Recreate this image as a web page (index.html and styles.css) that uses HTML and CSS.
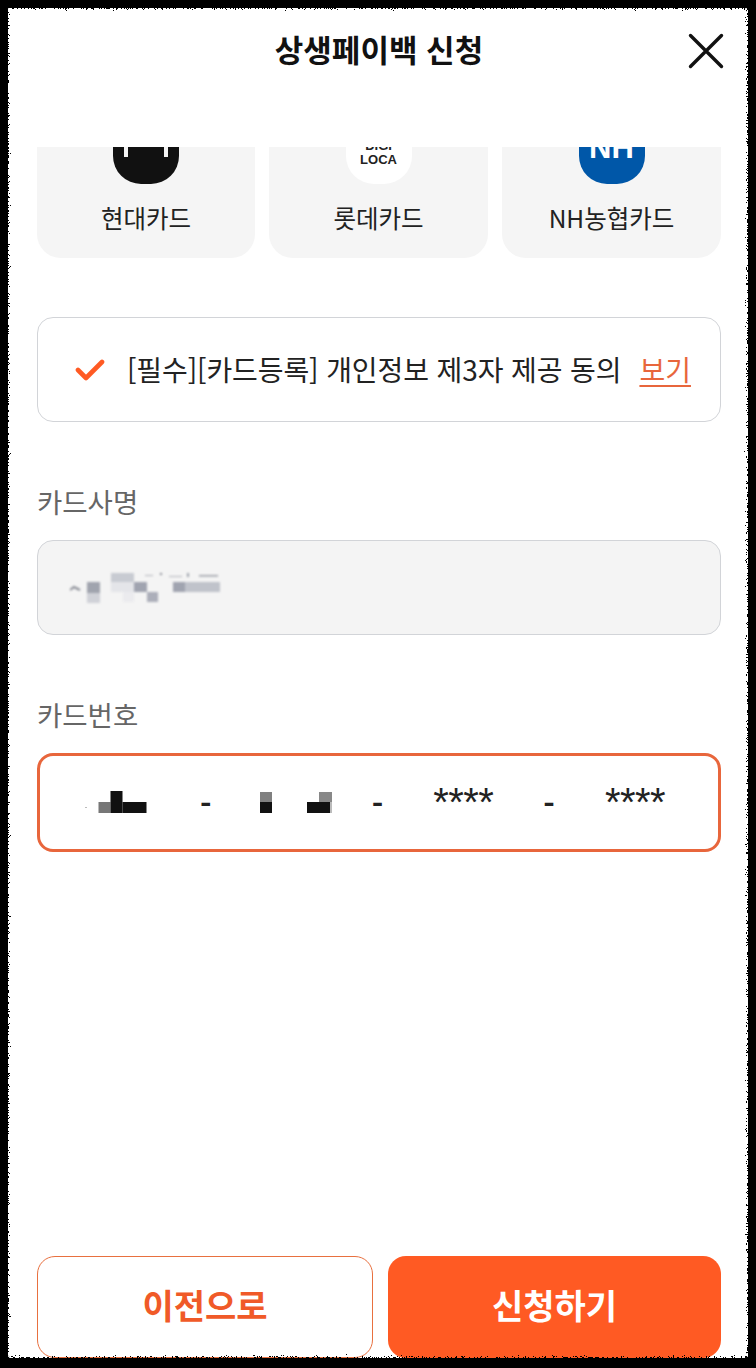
FILE: index.html
```html
<!DOCTYPE html>
<html lang="ko">
<head>
    <meta charset="UTF-8">
    <meta name="viewport" content="width=device-width, initial-scale=1.0">
    <title>상생페이백 신청</title>
    <link rel="stylesheet" href="styles.css">
</head>
<body>
    <div class="panel">
        <header class="top-bar">
            <h1>상생페이백 신청</h1>
            <button class="close-btn" aria-label="닫기">
                <svg width="36" height="36" viewBox="0 0 36 36">
                    <path d="M2.5 2.5 L33.5 33.5 M33.5 2.5 L2.5 33.5" stroke="#111" stroke-width="3.4" fill="none" stroke-linecap="round"/>
                </svg>
            </button>
        </header>

        <!-- Card list, scrolled so the logos are cut off at the top -->
        <div class="card-list">
            <div class="card-item">
                <div class="card-logo logo-hyundai">
                    <span class="notch"></span>
                    <span class="notch"></span>
                </div>
                <p>현대카드</p>
            </div>
            <div class="card-item">
                <div class="card-logo logo-lotte">DIGI<br>LOCA</div>
                <p>롯데카드</p>
            </div>
            <div class="card-item">
                <div class="card-logo logo-nh">NH</div>
                <p>NH농협카드</p>
            </div>
        </div>

        <div class="agree-box">
            <svg class="check" width="30" height="22" viewBox="0 0 30 22">
                <path d="M3 11 L11 19 L27 3" stroke="#ff5a23" stroke-width="4.6" fill="none" stroke-linecap="round" stroke-linejoin="round"/>
            </svg>
            <span class="agree-text">[필수][카드등록] 개인정보 제3자 제공 동의</span>
            <a href="#" class="agree-link">보기</a>
        </div>

        <label class="field-label label-name">카드사명</label>
        <div class="name-field">
            <svg class="mosaic" width="152" height="36" viewBox="70 570 152 36">
                <path d="M70 590 L74 587 L80 590" stroke="#8a8d96" stroke-width="2" fill="none"/>
                <rect x="87" y="582" width="13" height="11" fill="#a0a4ae"/>
                <rect x="87" y="593" width="13" height="10" fill="#d0d2d8"/>
                <rect x="111" y="573" width="23" height="9" fill="#c8cbd2"/>
                <rect x="111" y="582" width="23" height="10" fill="#e4e5e9"/>
                <rect x="134" y="582" width="13" height="10" fill="#a0a4b0"/>
                <rect x="147" y="592" width="11" height="10" fill="#acafba"/>
                <rect x="123" y="592" width="11" height="10" fill="#ebebee"/>
                <rect x="145" y="575" width="8" height="1" fill="#b4b6bd"/>
                <rect x="160" y="573" width="2" height="2" fill="#8a8d96"/>
                <rect x="169" y="576" width="13" height="1" fill="#b4b6bd"/>
                <rect x="187" y="573" width="2" height="4" fill="#a0a4ae"/>
                <rect x="199" y="575" width="19" height="1.5" fill="#9a9da6"/>
                <rect x="173" y="582" width="12" height="10" fill="#a0a4b0"/>
                <rect x="185" y="582" width="35" height="10" fill="#c0c3cb"/>
            </svg>
        </div>

        <label class="field-label label-number">카드번호</label>
        <div class="number-field">
            <div class="num-cell">
                <svg class="mosaic-dark" width="76" height="26" viewBox="82.5 790 76 26">
                    <rect x="86" y="807" width="1" height="1" fill="#777"/>
                    <rect x="99" y="802" width="12" height="11" fill="#777"/>
                    <rect x="111" y="791" width="12" height="22" fill="#111"/>
                    <rect x="123" y="802" width="24" height="11" fill="#111"/>
                </svg>
            </div>
            <span class="dash">-</span>
            <div class="num-cell">
                <svg class="mosaic-dark" width="80" height="26" viewBox="252 790 80 26">
                    <rect x="260" y="792" width="12" height="10" fill="#808080"/>
                    <rect x="260" y="802" width="12" height="11" fill="#111"/>
                    <rect x="319" y="792" width="15" height="10" fill="#888"/>
                    <rect x="330" y="802" width="4" height="11" fill="#bbb"/>
                    <rect x="307" y="802" width="23" height="11" fill="#111"/>
                </svg>
            </div>
            <span class="dash">-</span>
            <div class="num-cell stars">****</div>
            <span class="dash">-</span>
            <div class="num-cell stars">****</div>
        </div>

        <div class="bottom-btns">
            <button class="btn btn-prev">이전으로</button>
            <button class="btn btn-apply">신청하기</button>
        </div>
    </div>

    <!-- Rough black edge of the photographed screen -->
    <svg class="rough-edge" width="756" height="1368" viewBox="0 0 756 1368">
        <defs>
            <filter id="rough" x="-2%" y="-2%" width="104%" height="104%" color-interpolation-filters="sRGB">
                <feTurbulence type="fractalNoise" baseFrequency="0.9" numOctaves="2" seed="4"/>
                <feDisplacementMap in="SourceGraphic" scale="10" xChannelSelector="R" yChannelSelector="G"/>
                <feGaussianBlur stdDeviation="0.6"/>
            </filter>
        </defs>
        <rect x="-12" y="-12" width="780" height="1390" rx="22" fill="none" stroke="#000" stroke-width="40" filter="url(#rough)"/>
    </svg>
</body>
</html>
```

FILE: styles.css
```css
/* General Styles */
* {
    margin: 0;
    padding: 0;
    box-sizing: border-box;
    font-family: "Noto Sans CJK KR", "Noto Sans", sans-serif;
}

html, body {
    height: 1368px;
    overflow: hidden;
}

body {
    background: #000;
    color: #222;
    padding: 8px;
}

.panel {
    display: flex;
    flex-direction: column;
    height: 1350px;
    background: #fff;
    padding: 0 27px 0 29px;
}

/* Header */
.top-bar {
    display: flex;
    justify-content: center;
    align-items: flex-start;
    height: 139px;
    position: relative;
}

.top-bar h1 {
    font-size: 31px;
    font-weight: 700;
    line-height: 44px;
    margin-top: 19px;
    color: #111;
}

.close-btn {
    position: absolute;
    right: -3px;
    top: 25px;
    width: 36px;
    height: 36px;
    border: 0;
    background: none;
}

/* Card list */
.card-list {
    display: grid;
    grid-template-columns: 218px 219px 219px;
    justify-content: space-between;
    align-content: end;
    height: 111px;
    overflow: hidden;
}

.card-item {
    display: flex;
    flex-direction: column;
    align-items: center;
    height: 160px;
    padding-top: 20px;
    background: #f5f5f5;
    border-radius: 24px;
}

.card-item p {
    font-size: 24.5px;
    line-height: 32px;
    margin-top: 18px;
    color: #222;
}

.card-logo {
    width: 66px;
    height: 66px;
    flex-shrink: 0;
    border-radius: 28px;
    text-align: center;
}

.logo-hyundai {
    display: flex;
    justify-content: space-between;
    padding: 0 11px;
    background: #111;
}

.notch {
    width: 4px;
    height: 39px;
    background: #f5f5f5;
}

.logo-lotte {
    padding-top: 21px;
    background: #fff;
    color: #222;
    font-family: "Liberation Sans", sans-serif;
    font-size: 13px;
    font-weight: 700;
    line-height: 14px;
}

.logo-nh {
    padding-top: 12px;
    background: #0057a8;
    color: #fff;
    font-family: "Liberation Sans", sans-serif;
    font-size: 31px;
    font-weight: 700;
    line-height: 36px;
}

/* Agreement */
.agree-box {
    display: flex;
    align-items: center;
    height: 105px;
    margin-top: 59px;
    padding-left: 37px;
    border: 1px solid #d2d4d8;
    border-radius: 16px;
}

.check {
    flex-shrink: 0;
    margin-right: 22px;
}

.agree-text {
    font-size: 28px;
    margin-top: -2px;
    letter-spacing: -0.1px;
    color: #222;
}

.agree-link {
    margin-left: 18px;
    margin-top: -2px;
    font-size: 28px;
    color: #e8663c;
    text-underline-offset: 4px;
}

/* Fields */
.field-label {
    display: block;
    font-size: 27.5px;
    line-height: 36px;
    color: #666;
}

.label-name {
    margin-top: 61px;
    margin-bottom: 21px;
}

.label-number {
    margin-top: 61px;
    margin-bottom: 21px;
}

.name-field {
    display: flex;
    align-items: center;
    height: 95px;
    padding-left: 32px;
    background: #f4f4f4;
    border: 1px solid #d2d4d8;
    border-radius: 16px;
}

.mosaic {
    filter: blur(0.8px);
}

.mosaic-dark {
    filter: blur(0.4px);
}

.number-field {
    display: flex;
    align-items: center;
    height: 99px;
    padding-right: 3px;
    border: 3px solid #e8663c;
    border-radius: 16px;
}

.num-cell {
    display: flex;
    flex: 1;
    justify-content: center;
}

.stars {
    font-family: "Liberation Sans", sans-serif;
    font-size: 40px;
    line-height: 36px;
    letter-spacing: -0.6px;
    margin-top: -1px;
    color: #222;
}

.dash {
    font-size: 31px;
    font-weight: 700;
    line-height: 36px;
    color: #222;
}

/* Bottom Buttons */
.bottom-btns {
    display: grid;
    grid-template-columns: 336px 333px;
    justify-content: space-between;
    margin-top: auto;
}

.btn {
    height: 102px;
    padding-bottom: 6px;
    border-radius: 18px;
    font-size: 34px;
    font-weight: 700;
}

.btn-prev {
    background: #fff;
    border: 1.5px solid #e8703f;
    color: #f05a28;
}

.btn-apply {
    background: #ff5a23;
    border: 0;
    color: #fff;
}

/* Screen edge */
.rough-edge {
    position: absolute;
    top: 0;
    left: 0;
    pointer-events: none;
}
```
